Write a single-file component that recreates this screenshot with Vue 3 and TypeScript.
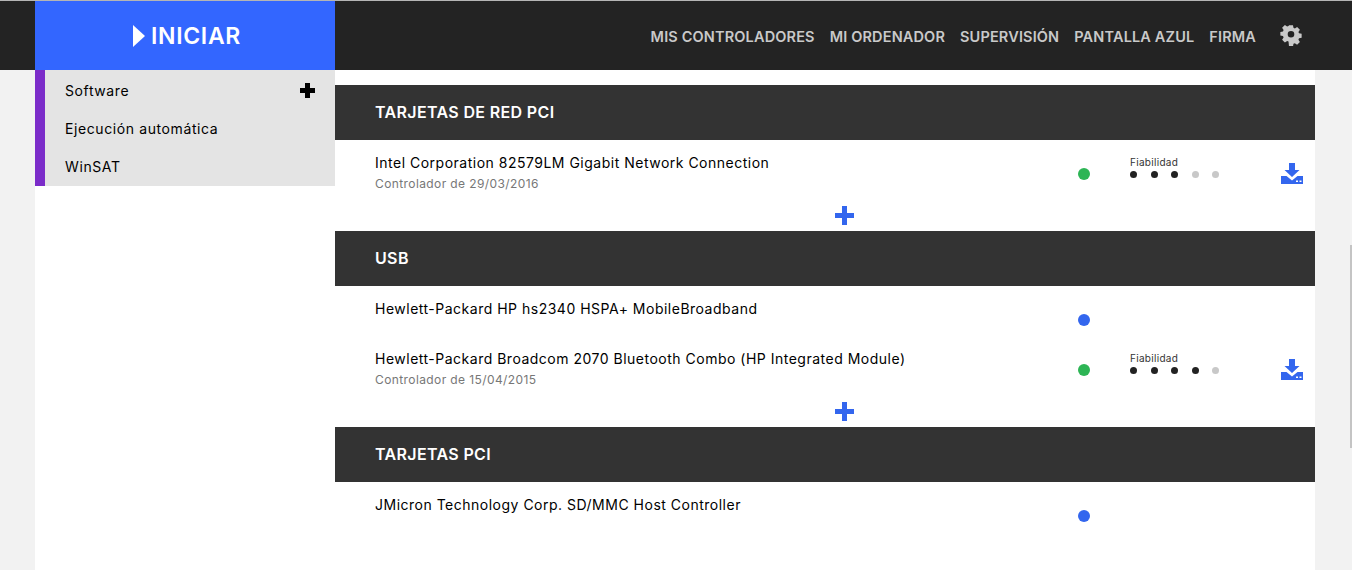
<script setup lang="ts">
interface Driver {
  name: string
  date?: string
  status: 'ok' | 'plain'
  reliability?: number
}

interface Group {
  title: string
  drivers: Driver[]
  more: boolean
}

const navLinks = ['MIS CONTROLADORES', 'MI ORDENADOR', 'SUPERVISIÓN', 'PANTALLA AZUL', 'FIRMA']
const sideLinks = ['Software', 'Ejecución automática', 'WinSAT']

const groups: Group[] = [
  {
    title: 'TARJETAS DE RED PCI',
    more: true,
    drivers: [
      {
        name: 'Intel Corporation 82579LM Gigabit Network Connection',
        date: 'Controlador de 29/03/2016',
        status: 'ok',
        reliability: 3,
      },
    ],
  },
  {
    title: 'USB',
    more: true,
    drivers: [
      { name: 'Hewlett-Packard HP hs2340 HSPA+ MobileBroadband', status: 'plain' },
      {
        name: 'Hewlett-Packard Broadcom 2070 Bluetooth Combo (HP Integrated Module)',
        date: 'Controlador de 15/04/2015',
        status: 'ok',
        reliability: 4,
      },
    ],
  },
  {
    title: 'TARJETAS PCI',
    more: false,
    drivers: [{ name: 'JMicron Technology Corp. SD/MMC Host Controller', status: 'plain' }],
  },
]
</script>

<template>
  <div class="page">
    <header class="topbar">
      <div class="start">
        <span class="arrow"></span>
        <span>INICIAR</span>
      </div>
      <nav class="nav">
        <a v-for="link in navLinks" :key="link">{{ link }}</a>
        <svg class="gear" viewBox="0 0 24 24" width="22" height="22">
          <path
            fill="#c9c9c9"
            fill-rule="evenodd"
            d="M9.6 1h4.8l.6 3.2 1.700.7 2.700-1.800 3.400 3.400-1.800 2.700.7 1.700 3.200.6v4.800l-3.200.6-.7 1.700 1.800 2.700-3.400 3.400-2.700-1.800-1.700.7-.6 3.200H9.600L9 20.900l-1.700-.7-2.700 1.800-3.400-3.400 1.800-2.700-.7-1.700-3.200-.6V9.200l3.200-.6.7-1.700-1.800-2.700 3.400-3.400 2.700 1.800 1.700-.7Z M12 8a4 4 0 1 0 0 8 4 4 0 0 0 0-8Z"
            transform="translate(1.200 .4) scale(.9)"
          />
        </svg>
      </nav>
    </header>

    <div class="body">
      <aside class="side">
        <ul class="menu">
          <li v-for="(link, i) in sideLinks" :key="link">
            <span>{{ link }}</span>
            <span v-if="i === 0" class="cross black"></span>
          </li>
        </ul>
      </aside>

      <main class="main">
        <section v-for="group in groups" :key="group.title" class="group">
          <h2>{{ group.title }}</h2>
          <div v-for="driver in group.drivers" :key="driver.name" class="row">
            <div class="text">
              <div class="name">{{ driver.name }}</div>
              <div v-if="driver.date" class="date">{{ driver.date }}</div>
            </div>
            <span class="status" :class="driver.status"></span>
            <div class="rating">
              <template v-if="driver.reliability">
                <div class="rating-label">Fiabilidad</div>
                <div class="dots">
                  <i v-for="n in 5" :key="n" :class="{ on: n <= driver.reliability }"></i>
                </div>
              </template>
            </div>
            <svg v-if="driver.reliability" class="download" viewBox="0 0 22 21" width="22" height="21">
              <path fill="#3366ee" d="M8 0h6v7h4.500L11 14 3.500 7H8Z" />
              <path
                fill="#3366ee"
                fill-rule="evenodd"
                d="M0 13h5.500L11 17.500 16.500 13H22v8H0Z M15 17.500h2v1.500h-2Z M18.500 17.500h2v1.500h-2Z"
              />
            </svg>
          </div>
          <div v-if="group.more" class="more">
            <span class="cross blue"></span>
          </div>
        </section>
      </main>
    </div>
    <div class="scroll-mark"></div>
  </div>
</template>

<style>
html,
body {
  margin: 0;
  background: #f2f2f2;
  overflow: hidden;
}
</style>

<style scoped>
.page {
  height: 570px;
  background: #f2f2f2;
  font-family: Inter, 'Liberation Sans', sans-serif;
  color: #000;
  position: relative;
}

.topbar {
  height: 69px;
  border-top: 1px solid #b5b5b5;
  background: #232323;
  display: flex;
  justify-content: space-between;
  padding-left: 35px;
}

.start {
  width: 300px;
  background: #3366ff;
  color: #fff;
  font-size: 23px;
  font-weight: 600;
  letter-spacing: 0.7px;
  display: flex;
  align-items: center;
  justify-content: center;
  gap: 6px;
  padding-left: 4px;
  box-sizing: border-box;
}

.arrow {
  width: 0;
  height: 0;
  border-left: 12px solid #fff;
  border-top: 11px solid transparent;
  border-bottom: 11px solid transparent;
}

.nav {
  display: flex;
  align-items: center;
  gap: 15px;
  padding-right: 50px;
  color: #c9c9c9;
  font-size: 14.500px;
  font-weight: 600;
  letter-spacing: 0.15px;
}

.nav a {
  padding-top: 1px;
}

.gear {
  margin-left: 9px;
  margin-bottom: 2px;
}

.body {
  margin: 0 37px 0 35px;
  background: #fff;
  display: flex;
  height: 500px;
}

.side {
  width: 300px;
  flex: none;
}

.menu {
  margin: 0;
  padding: 0 20px;
  list-style: none;
  background: #e4e4e4;
  border-left: 10px solid #7b2cc9;
  height: 116px;
  box-sizing: border-box;
  font-size: 14px;
  letter-spacing: 0.6px;
}

.menu li {
  height: 38px;
  display: flex;
  align-items: center;
  justify-content: space-between;
  position: relative;
  top: 1px;
}

.main {
  flex: 1;
  padding-top: 15px;
}

h2 {
  margin: 0;
  height: 53px;
  padding: 0 0 2px 40px;
  background: #333;
  color: #fff;
  font-size: 16px;
  font-weight: 600;
  letter-spacing: 0.35px;
  display: flex;
  align-items: center;
}

.row {
  height: 50px;
  display: flex;
  align-items: flex-start;
  padding-left: 40px;
}

.text {
  width: 703px;
  padding-top: 14px;
}

.name {
  font-size: 14px;
  line-height: 18px;
  letter-spacing: 0.5px;
  white-space: nowrap;
}

.date {
  margin-top: 4px;
  font-size: 12px;
  line-height: 15px;
  letter-spacing: 0.4px;
  color: #777;
}

.status {
  width: 12px;
  height: 12px;
  border-radius: 50%;
  margin-top: 28px;
  flex: none;
}

.status.ok {
  background: #2db555;
}

.status.plain {
  background: #3366ee;
}

.rating {
  width: 151px;
  margin-left: 40px;
  padding-top: 16px;
  flex: none;
}

.rating-label {
  font-size: 10px;
  line-height: 12px;
  letter-spacing: 0.3px;
  color: #333;
}

.dots {
  display: flex;
  gap: 13.500px;
  margin-top: 3px;
}

.dots i {
  width: 7px;
  height: 7px;
  border-radius: 50%;
  background: #c8c8c8;
}

.dots i.on {
  background: #222;
}

.download {
  margin-top: 23px;
}

.more {
  height: 41px;
  display: flex;
  justify-content: center;
  padding: 16px 0 0 38px;
  box-sizing: border-box;
}

.cross {
  display: block;
  position: relative;
  flex: none;
}

.cross::before,
.cross::after {
  content: '';
  position: absolute;
  background: currentColor;
}

.cross.blue {
  width: 19px;
  height: 19px;
  color: #3366ee;
}

.cross.blue::before {
  left: 0;
  right: 0;
  top: 7px;
  height: 5px;
}

.cross.blue::after {
  top: 0;
  bottom: 0;
  left: 7px;
  width: 5px;
}

.cross.black {
  width: 15px;
  height: 15px;
  color: #000;
}

.cross.black::before {
  left: 0;
  right: 0;
  top: 5px;
  height: 5px;
}

.cross.black::after {
  top: 0;
  bottom: 0;
  left: 5px;
  width: 5px;
}

.scroll-mark {
  position: absolute;
  right: 0;
  top: 245px;
  width: 2px;
  height: 203px;
  background: #c4c4c4;
}
</style>
